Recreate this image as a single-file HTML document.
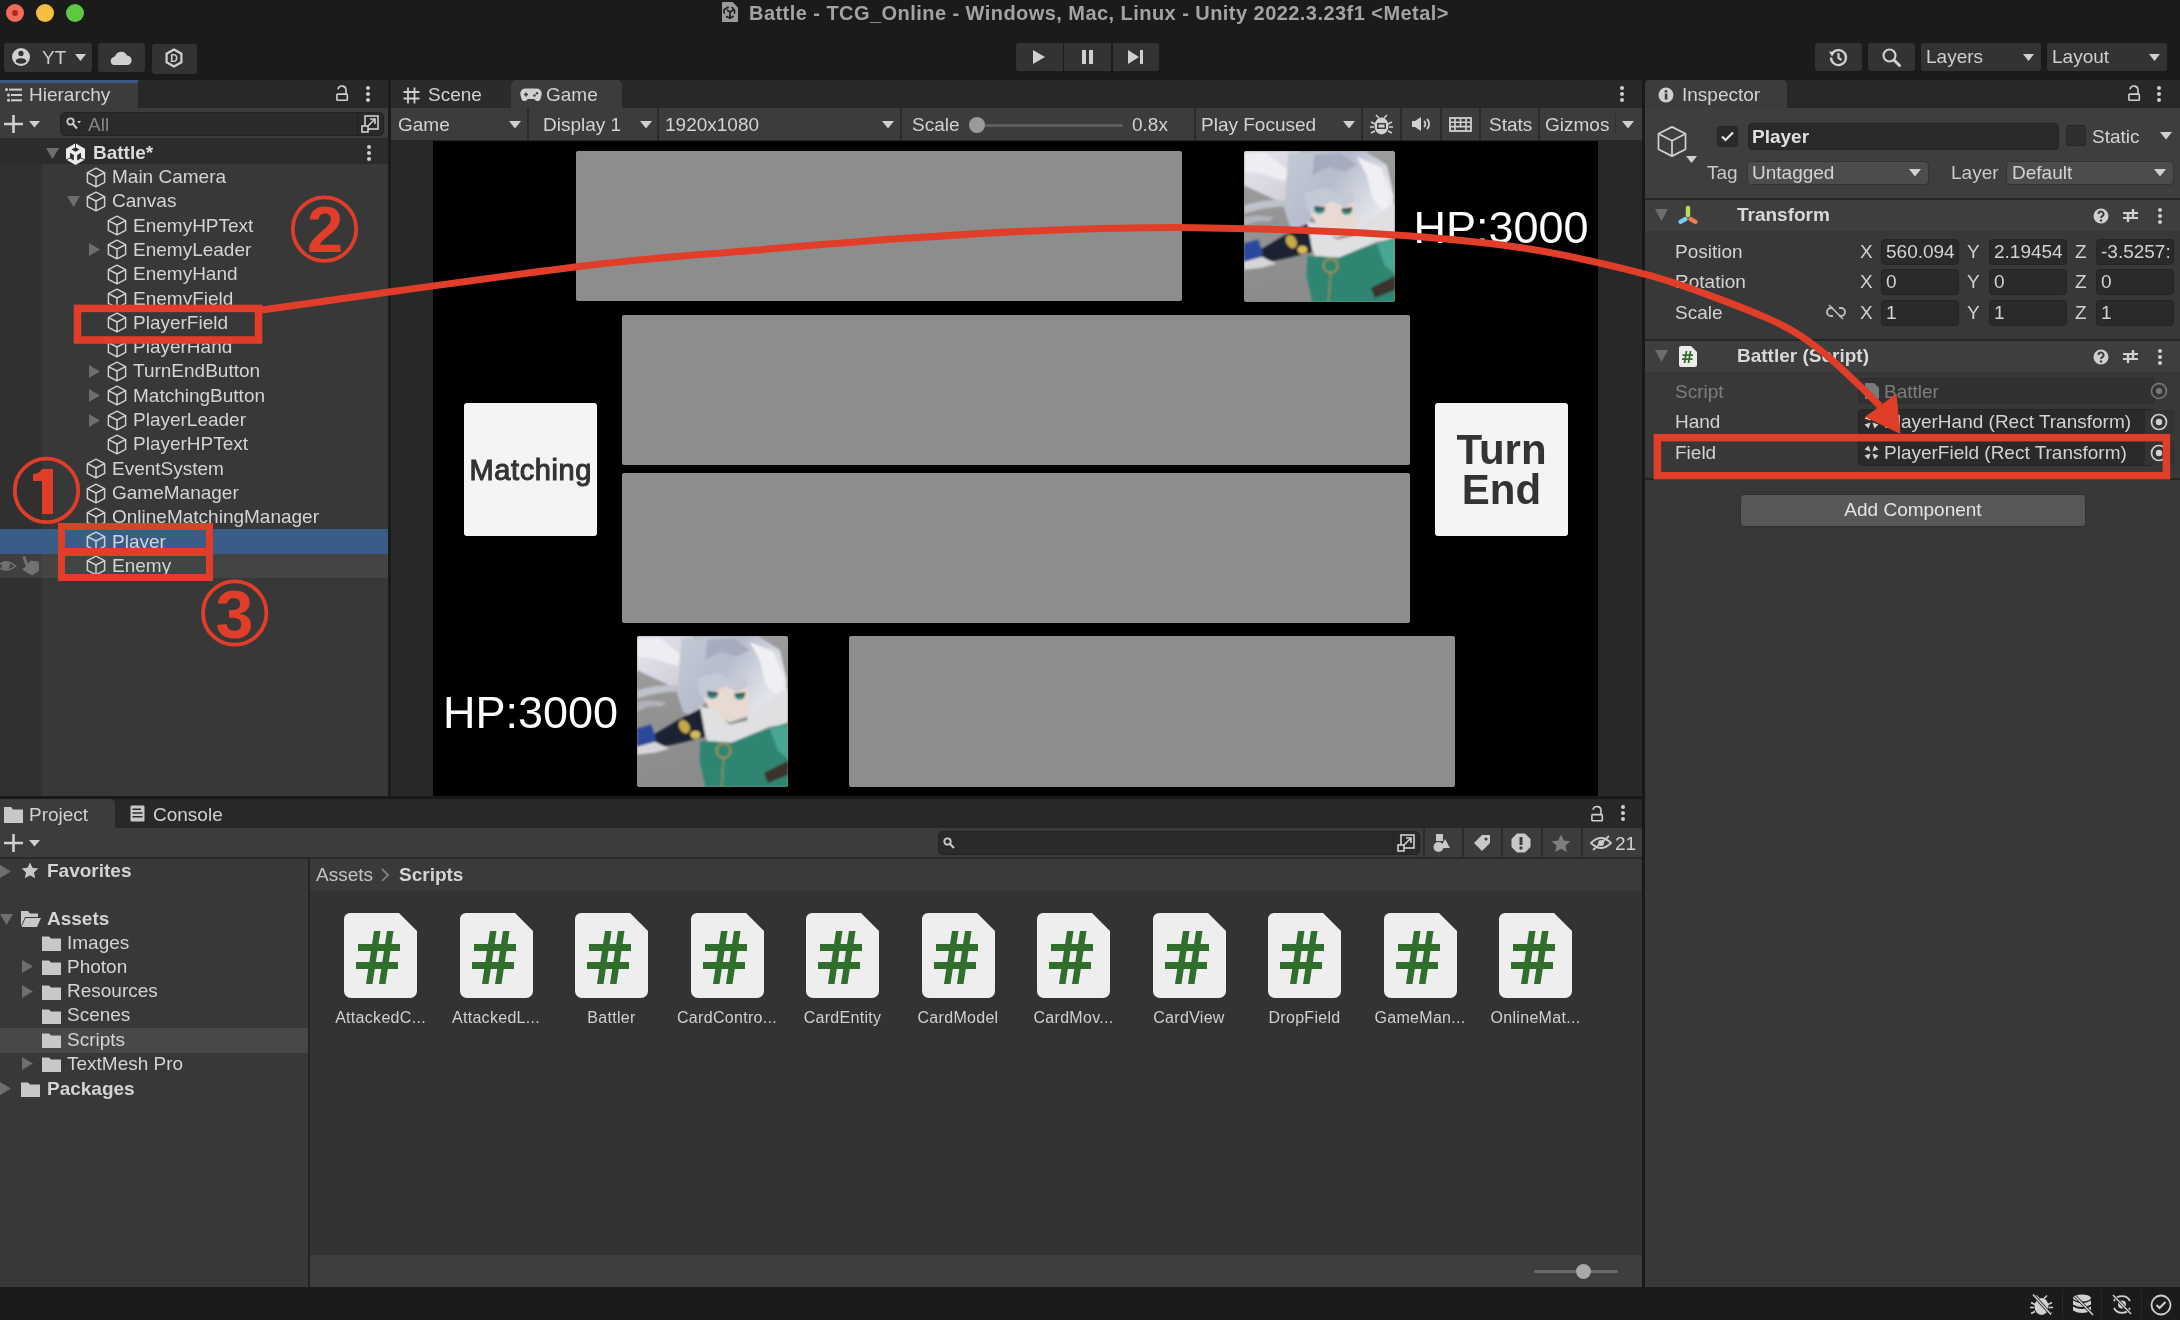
<!DOCTYPE html>
<html><head><meta charset="utf-8">
<style>
*{margin:0;padding:0;box-sizing:border-box}
html,body{width:2180px;height:1320px;overflow:hidden;}
body{will-change:transform;background:#1b1b1b;font-family:"Liberation Sans",sans-serif;color:#d2d2d2}
.a{position:absolute}
.t{position:absolute;white-space:nowrap;font-size:19px;line-height:20px}
.b{font-weight:bold}
</style></head><body>
<svg width="0" height="0" style="position:absolute"><defs>
<symbol id="cube" viewBox="0 0 20 21"><path d="M10 1.2L18.6 5.6V15.4L10 19.8L1.4 15.4V5.6Z M1.4 5.6L10 10L18.6 5.6 M10 10V19.8" fill="none" stroke="#d0d0d0" stroke-width="1.5" stroke-linejoin="round"/></symbol>
<symbol id="unity" viewBox="0 0 20 22"><path d="M9.5 0.3L19 5.8V16.6L9.5 22L0 16.6V5.8Z" fill="#ebebeb"/><g fill="#2c2c2c"><path d="M9.5 4.2L13.4 6.5L9.5 8.8L5.6 6.5Z"/><path d="M4 9.7L7.8 11.9V17.4L4 15.2Z"/><path d="M15 9.7L11.2 11.9V17.4L15 15.2Z"/></g><path d="M9.5 0V4.5M4.2 15L0 16.8M14.8 15L19 16.8" stroke="#2c2c2c" stroke-width="0.9"/></symbol>
<symbol id="girl" viewBox="0 0 150 150">
<defs><linearGradient id="gbg" x1="0" y1="0" x2="0.2" y2="1"><stop offset="0" stop-color="#a2a2a4"/><stop offset="0.5" stop-color="#939393"/><stop offset="1" stop-color="#8b8b8b"/></linearGradient>
<linearGradient id="ghair" x1="0" y1="0" x2="1" y2="0.6"><stop offset="0" stop-color="#c6cad6"/><stop offset="0.45" stop-color="#b6bccc"/><stop offset="0.8" stop-color="#dcdee6"/><stop offset="1" stop-color="#eeeef2"/></linearGradient>
<linearGradient id="gband" x1="0" y1="0" x2="1" y2="1"><stop offset="0" stop-color="#e8e6ee"/><stop offset="1" stop-color="#c8c8d4"/></linearGradient>
<filter id="gblur" x="-5%" y="-5%" width="110%" height="110%"><feGaussianBlur stdDeviation="0.8"/></filter>
<clipPath id="gclip"><rect width="150" height="150" rx="2"/></clipPath></defs>
<g clip-path="url(#gclip)">
<rect width="150" height="150" fill="url(#gbg)"/>
<g filter="url(#gblur)">
<path d="M0,0 L56,0 L64,28 L62,48 L48,62 L34,50 L0,34Z" fill="url(#gband)"/>
<path d="M0,4 L22,2 L46,20 L40,30 L16,22 L0,20Z" fill="#efedf3"/>
<path d="M0,54 Q22,47 44,49 L46,55 Q22,55 0,62Z" fill="#bfc2cb"/>
<path d="M0,66 Q10,62 30,66 L24,70 Q10,68 0,76Z" fill="#b0b3bb"/>
<path d="M44,2 L72,0 L120,0 L142,14 L149,45 L148,60 L132,76 L122,94 L108,98 L110,78 L104,62 L92,50 L78,52 L70,62 L58,80 L46,76 L40,58 L42,30Z" fill="url(#ghair)"/>
<path d="M70,4 L96,2 L112,14 L100,20 L84,16 L68,24Z" fill="#a4acbe"/>
<path d="M112,6 L136,16 L146,44 L140,60 L128,48 L122,24Z" fill="#f0f0f4"/>
<path d="M66,48 L108,44 L112,64 L110,80 L92,86 L74,76 L66,62Z" fill="#e8dad2"/>
<path d="M60,42 L80,36 L94,44 L108,40 L110,50 L100,56 L88,50 L80,54 L70,62 L62,58Z" fill="#c4c9d6"/>

<ellipse cx="75" cy="59" rx="5" ry="3.3" fill="#2a8a80"/><ellipse cx="102" cy="60" rx="5" ry="3.3" fill="#2a8a80"/>
<path d="M70,55 L81,56 L80,58 L70,58Z M97,57 L108,56 L107,59 L97,59Z" fill="#3c3c48"/>
<path d="M62,70 L74,72 L92,88 L110,84 L122,70 L132,62 L150,52 L150,88 L132,90 L118,96 L94,106 L70,104 L64,88Z" fill="#e0e0e3"/>
<path d="M63,104 L94,106 L118,96 L150,86 L150,150 L68,150 L62,124Z" fill="#2e8672"/>
<path d="M132,92 L150,88 L150,122 L140,114Z" fill="#4aa692"/>
<path d="M126,136 L150,124 L150,138 L130,146Z" fill="#3a332b"/>
<path d="M13,100 L40,84 L63,72 L68,100 L44,106 L16,112Z" fill="#1e2433"/>
<ellipse cx="47" cy="90" rx="5" ry="7" fill="#c8a84a" transform="rotate(-30 47 90)"/>
<ellipse cx="58" cy="98" rx="5" ry="4" fill="#d8bc5a"/>
<path d="M0,92 L14,88 L19,102 L12,112 L0,110Z" fill="#2c4a9c"/>
<path d="M0,110 L18,105 L32,112 L18,116 L0,118Z" fill="#d6d6da"/>
<circle cx="86" cy="114" r="7" fill="none" stroke="#b89040" stroke-width="1.4"/>
<path d="M86,121 L84,150" stroke="#b89040" stroke-width="1"/>
</g></g>
</symbol>
<symbol id="cs" viewBox="0 0 73 85"><path d="M6 0H55L73 18V78A7 7 0 0 1 66 85H7A7 7 0 0 1 0 78V6A6 6 0 0 1 6 0z" fill="#eeeeee"/><g fill="#2f6e2b"><path d="M30 18h6.5L28.5 71H22z"/><path d="M43 18h6.5L41.5 71H35z"/><rect x="14" y="31" width="42" height="7"/><rect x="12" y="49" width="42" height="7"/></g></symbol>
</defs></svg>

<!-- ===== TITLE BAR / TOOLBAR ===== -->
<div class="a" style="left:0;top:0;width:2180px;height:80px;background:#1b1b1b"></div>
<div class="a" style="left:6px;top:4px;width:18px;height:18px;border-radius:50%;background:#f26a5c"></div>
<div class="a" style="left:12px;top:10px;width:6px;height:6px;border-radius:50%;background:#b3281a"></div>
<div class="a" style="left:36px;top:4px;width:18px;height:18px;border-radius:50%;background:#f5bd42"></div>
<div class="a" style="left:66px;top:4px;width:18px;height:18px;border-radius:50%;background:#5ec843"></div>
<svg class="a" style="left:721px;top:1px" width="18" height="23" viewBox="0 0 18 23"><path d="M1 1h10.5l5.5 5.5V21H1z" fill="#9a9a9a"/><g fill="none" stroke="#1e1e1e" stroke-width="1.7" stroke-linejoin="round"><path d="M3.1 12.8V8.6L7.6 6M13.5 12.8V9.2L10.6 6M5.9 9L9 10.9L12.3 9M9 10.9V17.3M5 15.3L9 17.3L12.7 15.1"/></g></svg>
<div class="t b" style="left:749px;top:2px;font-size:20px;line-height:22px;color:#a3a3a3;letter-spacing:0.45px">Battle - TCG_Online - Windows, Mac, Linux - Unity 2022.3.23f1 &lt;Metal&gt;</div>
<!-- account -->
<div class="a" style="left:4px;top:43px;width:88px;height:29px;border-radius:3px;background:#333333"></div>
<svg class="a" style="left:11px;top:47px" width="20" height="20" viewBox="0 0 20 20"><circle cx="10" cy="10" r="9" fill="#d0d0d0"/><circle cx="10" cy="6.4" r="2.6" fill="#333333"/><ellipse cx="10" cy="14" rx="5.3" ry="2.8" fill="#333333"/></svg>
<div class="t" style="left:42px;top:48px;font-size:19px;color:#cfcfcf">YT</div>
<svg class="a" style="left:75px;top:54px" width="12" height="8" viewBox="0 0 12 8"><path d="M0 0h11L5.5 7z" fill="#d0d0d0"/></svg>
<div class="a" style="left:98px;top:43px;width:47px;height:29px;border-radius:3px;background:#333333"></div>
<svg class="a" style="left:110px;top:49px" width="23" height="16" viewBox="0 0 23 16"><path d="M3.5 16A4 4 0 0 1 2.8 8.6A4.4 4.4 0 0 1 5.2 7.2A6.4 6.4 0 0 1 17 6.4A4.9 4.9 0 0 1 18 16Z" fill="#d0d0d0"/></svg>
<div class="a" style="left:152px;top:44px;width:45px;height:30px;border-radius:3px;background:#333333"></div>
<svg class="a" style="left:164px;top:48px" width="20" height="20" viewBox="0 0 20 20"><path d="M10 1.5l7.4 4.25v8.5L10 18.5l-7.4-4.25v-8.5z" fill="none" stroke="#d0d0d0" stroke-width="2.2"/><text x="10" y="14.3" font-size="10.5" font-weight="bold" text-anchor="middle" fill="#d0d0d0" font-family="Liberation Sans">D</text></svg>
<!-- play -->
<div class="a" style="left:1016px;top:43px;width:47px;height:28px;border-radius:3px 0 0 3px;background:#333333"></div>
<div class="a" style="left:1064px;top:43px;width:47px;height:28px;background:#333333"></div>
<div class="a" style="left:1113px;top:43px;width:46px;height:28px;border-radius:0 3px 3px 0;background:#333333"></div>
<svg class="a" style="left:1031px;top:49px" width="16" height="16" viewBox="0 0 16 16"><path d="M2 1l12 7-12 7z" fill="#d0d0d0"/></svg>
<svg class="a" style="left:1080px;top:49px" width="16" height="16" viewBox="0 0 16 16"><rect x="2" y="1" width="4" height="14" fill="#d0d0d0"/><rect x="9" y="1" width="4" height="14" fill="#d0d0d0"/></svg>
<svg class="a" style="left:1127px;top:49px" width="18" height="16" viewBox="0 0 18 16"><path d="M1 1l11 7-11 7z" fill="#d0d0d0"/><rect x="13" y="1" width="3" height="14" fill="#d0d0d0"/></svg>
<!-- right -->
<div class="a" style="left:1815px;top:43px;width:47px;height:28px;border-radius:3px;background:#333333"></div>
<svg class="a" style="left:1828px;top:47px" width="21" height="21" viewBox="0 0 21 21"><path d="M4.2 6.5A7.5 7.5 0 1 1 3 10.5" fill="none" stroke="#d0d0d0" stroke-width="2.3"/><path d="M1 4.5l6 .5-3 4.5z" fill="#d0d0d0"/><path d="M10.5 6v5l3 2" fill="none" stroke="#d0d0d0" stroke-width="2.2"/></svg>
<div class="a" style="left:1868px;top:43px;width:47px;height:28px;border-radius:3px;background:#333333"></div>
<svg class="a" style="left:1881px;top:47px" width="21" height="21" viewBox="0 0 21 21"><circle cx="8.5" cy="8.5" r="6" fill="none" stroke="#d0d0d0" stroke-width="2.2"/><path d="M13 13l5.5 5.5" stroke="#d0d0d0" stroke-width="3" stroke-linecap="round"/></svg>
<div class="a" style="left:1921px;top:43px;width:120px;height:28px;border-radius:3px;background:#333333"></div>
<div class="t" style="left:1926px;top:47px;font-size:19px;color:#cfcfcf">Layers</div>
<svg class="a" style="left:2023px;top:54px" width="12" height="8" viewBox="0 0 12 8"><path d="M0 0h11L5.5 7z" fill="#d0d0d0"/></svg>
<div class="a" style="left:2047px;top:43px;width:120px;height:28px;border-radius:3px;background:#333333"></div>
<div class="t" style="left:2052px;top:47px;font-size:19px;color:#cfcfcf">Layout</div>
<svg class="a" style="left:2149px;top:54px" width="12" height="8" viewBox="0 0 12 8"><path d="M0 0h11L5.5 7z" fill="#d0d0d0"/></svg>


<!-- ===== HIERARCHY ===== -->
<div class="a" style="left:0;top:80px;width:388px;height:716px;background:#383838"></div>
<div class="a" style="left:0;top:80px;width:388px;height:28px;background:#282828"></div>
<div class="a" style="left:0;top:80px;width:138px;height:28px;background:#3c3c3c;border-top:3px solid #3a5a84"></div>
<svg class="a" style="left:5px;top:88px" width="17" height="14" viewBox="0 0 17 14"><g fill="#cfcfcf"><circle cx="1.5" cy="1.5" r="1.5"/><circle cx="3.5" cy="7" r="1.5"/><circle cx="3.5" cy="12.3" r="1.5"/><rect x="4" y="0.6" width="13" height="2"/><rect x="6" y="6" width="11" height="2"/><rect x="6" y="11.3" width="11" height="2"/></g></svg>
<div class="t" style="left:29px;top:85px;font-size:19px">Hierarchy</div>
<svg class="a" style="left:335px;top:85px" width="14" height="17" viewBox="0 0 14 17"><path d="M3.1 3.6A4.1 4.1 0 0 1 11 5.2V9" fill="none" stroke="#cfcfcf" stroke-width="1.6" stroke-linecap="round"/><rect x="1.9" y="9.1" width="10.4" height="6.1" rx="0.8" fill="none" stroke="#cfcfcf" stroke-width="1.6"/></svg>
<svg class="a" style="left:365px;top:86px" width="6" height="16" viewBox="0 0 6 16"><g fill="#cfcfcf"><circle cx="3" cy="2" r="2"/><circle cx="3" cy="8" r="2"/><circle cx="3" cy="14" r="2"/></g></svg>
<div class="a" style="left:0;top:108px;width:388px;height:31px;background:#3c3c3c"></div>
<div class="a" style="left:0;top:138px;width:388px;height:2px;background:#2a2a2a"></div>
<svg class="a" style="left:4px;top:115px" width="19" height="18" viewBox="0 0 19 18"><path d="M9.5 0v18M0 9h19" stroke="#d0d0d0" stroke-width="2.6"/></svg>
<svg class="a" style="left:29px;top:121px" width="11" height="7" viewBox="0 0 11 7"><path d="M0 0h11L5.5 6.5z" fill="#d0d0d0"/></svg>
<div class="a" style="left:60px;top:112px;width:324px;height:24px;border-radius:5px;background:#2a2a2a;border:1px solid #232323"></div>
<div class="a" style="left:357px;top:113px;width:1px;height:22px;background:#222"></div>
<svg class="a" style="left:66px;top:117px" width="15" height="13" viewBox="0 0 15 13"><circle cx="4.5" cy="4.5" r="3.2" fill="none" stroke="#cfcfcf" stroke-width="1.8"/><path d="M7 7l4 4.5" stroke="#cfcfcf" stroke-width="2"/><path d="M11 4h4l-2 2.5z" fill="#cfcfcf"/></svg>
<div class="t" style="left:88px;top:115px;font-size:19px;color:#858585">All</div>
<svg class="a" style="left:361px;top:115px" width="18" height="18" viewBox="0 0 18 18"><rect x="4" y="1" width="13" height="13" fill="none" stroke="#cfcfcf" stroke-width="1.6"/><rect x="1" y="11" width="6" height="6" fill="#2a2a2a" stroke="#cfcfcf" stroke-width="1.6"/><path d="M7 11l7-7M9 4h5v5" fill="none" stroke="#cfcfcf" stroke-width="1.6"/></svg>
<div class="a" style="left:0;top:140px;width:42px;height:656px;background:#303030"></div>
<div class="a" style="left:0;top:140px;width:388px;height:24px;background:#2c2c2c"></div>
<div class="a" style="left:0;top:529px;width:388px;height:25px;background:#395d87"></div>
<div class="a" style="left:0;top:554px;width:42px;height:24px;background:#3f3f3f"></div>
<div class="a" style="left:42px;top:554px;width:346px;height:24px;background:#444444"></div>
<svg class="a" style="left:0;top:559px" width="17" height="15" viewBox="0 0 17 15"><path d="M-3 7Q6 -1 15.5 7Q6 15 -3 7z" fill="none" stroke="#727272" stroke-width="1.5"/><circle cx="5.7" cy="6.3" r="4.2" fill="#727272"/></svg>
<svg class="a" style="left:21px;top:556px" width="19" height="20" viewBox="0 0 19 20"><path d="M2.2 1.6L5.6 10.8L2 13.2L9 17.8L11.5 18.6L17.5 14.6L17.2 6.2L10 5.4L8.2 6.8L6.6 8.8L3.8 0.8Z" fill="#727272" stroke="#727272" stroke-width="1.2" stroke-linejoin="round"/></svg>
<svg class="a" style="left:46px;top:147.7px" width="13" height="11" viewBox="0 0 13 11"><path d="M0 0h13L6.5 11z" fill="#6e6e6e"/></svg>
<svg class="a" style="left:66px;top:142.7px" width="20" height="22" viewBox="0 0 20 22"><use href="#unity"/></svg>
<div class="t b" style="left:93px;top:142.7px;font-size:19px;color:#dcdcdc">Battle*</div>
<svg class="a" style="left:366px;top:144.7px" width="6" height="16" viewBox="0 0 6 16"><g fill="#cfcfcf"><circle cx="3" cy="2" r="2"/><circle cx="3" cy="8" r="2"/><circle cx="3" cy="14" r="2"/></g></svg>
<svg class="a" style="left:86px;top:166.5px" width="20" height="21" viewBox="0 0 20 21"><use href="#cube"/></svg>
<div class="t" style="left:112px;top:167.0px;font-size:19px;color:#d4d4d4">Main Camera</div>
<svg class="a" style="left:67px;top:196.3px" width="13" height="11" viewBox="0 0 13 11"><path d="M0 0h13L6.5 11z" fill="#6e6e6e"/></svg>
<svg class="a" style="left:86px;top:190.8px" width="20" height="21" viewBox="0 0 20 21"><use href="#cube"/></svg>
<div class="t" style="left:112px;top:191.3px;font-size:19px;color:#d4d4d4">Canvas</div>
<svg class="a" style="left:107px;top:215.1px" width="20" height="21" viewBox="0 0 20 21"><use href="#cube"/></svg>
<div class="t" style="left:133px;top:215.6px;font-size:19px;color:#d4d4d4">EnemyHPText</div>
<svg class="a" style="left:89px;top:243.4px" width="11" height="13" viewBox="0 0 11 13"><path d="M0 0v13L11 6.5z" fill="#6e6e6e"/></svg>
<svg class="a" style="left:107px;top:239.4px" width="20" height="21" viewBox="0 0 20 21"><use href="#cube"/></svg>
<div class="t" style="left:133px;top:239.9px;font-size:19px;color:#d4d4d4">EnemyLeader</div>
<svg class="a" style="left:107px;top:263.7px" width="20" height="21" viewBox="0 0 20 21"><use href="#cube"/></svg>
<div class="t" style="left:133px;top:264.2px;font-size:19px;color:#d4d4d4">EnemyHand</div>
<svg class="a" style="left:107px;top:288.0px" width="20" height="21" viewBox="0 0 20 21"><use href="#cube"/></svg>
<div class="t" style="left:133px;top:288.5px;font-size:19px;color:#d4d4d4">EnemyField</div>
<svg class="a" style="left:107px;top:312.3px" width="20" height="21" viewBox="0 0 20 21"><use href="#cube"/></svg>
<div class="t" style="left:133px;top:312.8px;font-size:19px;color:#d4d4d4">PlayerField</div>
<svg class="a" style="left:107px;top:336.6px" width="20" height="21" viewBox="0 0 20 21"><use href="#cube"/></svg>
<div class="t" style="left:133px;top:337.1px;font-size:19px;color:#d4d4d4">PlayerHand</div>
<svg class="a" style="left:89px;top:364.9px" width="11" height="13" viewBox="0 0 11 13"><path d="M0 0v13L11 6.5z" fill="#6e6e6e"/></svg>
<svg class="a" style="left:107px;top:360.9px" width="20" height="21" viewBox="0 0 20 21"><use href="#cube"/></svg>
<div class="t" style="left:133px;top:361.4px;font-size:19px;color:#d4d4d4">TurnEndButton</div>
<svg class="a" style="left:89px;top:389.2px" width="11" height="13" viewBox="0 0 11 13"><path d="M0 0v13L11 6.5z" fill="#6e6e6e"/></svg>
<svg class="a" style="left:107px;top:385.2px" width="20" height="21" viewBox="0 0 20 21"><use href="#cube"/></svg>
<div class="t" style="left:133px;top:385.8px;font-size:19px;color:#d4d4d4">MatchingButton</div>
<svg class="a" style="left:89px;top:413.6px" width="11" height="13" viewBox="0 0 11 13"><path d="M0 0v13L11 6.5z" fill="#6e6e6e"/></svg>
<svg class="a" style="left:107px;top:409.6px" width="20" height="21" viewBox="0 0 20 21"><use href="#cube"/></svg>
<div class="t" style="left:133px;top:410.1px;font-size:19px;color:#d4d4d4">PlayerLeader</div>
<svg class="a" style="left:107px;top:433.9px" width="20" height="21" viewBox="0 0 20 21"><use href="#cube"/></svg>
<div class="t" style="left:133px;top:434.4px;font-size:19px;color:#d4d4d4">PlayerHPText</div>
<svg class="a" style="left:86px;top:458.2px" width="20" height="21" viewBox="0 0 20 21"><use href="#cube"/></svg>
<div class="t" style="left:112px;top:458.7px;font-size:19px;color:#d4d4d4">EventSystem</div>
<svg class="a" style="left:86px;top:482.5px" width="20" height="21" viewBox="0 0 20 21"><use href="#cube"/></svg>
<div class="t" style="left:112px;top:483.0px;font-size:19px;color:#d4d4d4">GameManager</div>
<svg class="a" style="left:86px;top:506.8px" width="20" height="21" viewBox="0 0 20 21"><use href="#cube"/></svg>
<div class="t" style="left:112px;top:507.3px;font-size:19px;color:#d4d4d4">OnlineMatchingManager</div>
<svg class="a" style="left:86px;top:531.1px" width="20" height="21" viewBox="0 0 20 21"><use href="#cube"/></svg>
<div class="t" style="left:112px;top:531.6px;font-size:19px;color:#d4d4d4">Player</div>
<svg class="a" style="left:86px;top:555.4px" width="20" height="21" viewBox="0 0 20 21"><use href="#cube"/></svg>
<div class="t" style="left:112px;top:555.9px;font-size:19px;color:#d4d4d4">Enemy</div>

<!-- ===== GAME ===== -->
<div class="a" style="left:391px;top:80px;width:1251px;height:28px;background:#282828"></div>
<div class="a" style="left:391px;top:80px;width:120px;height:28px;background:#2b2b2b;border-radius:5px 5px 0 0"></div>
<div class="a" style="left:511px;top:80px;width:111px;height:28px;background:#3c3c3c;border-radius:5px 5px 0 0"></div>
<svg class="a" style="left:403px;top:87px" width="17" height="17" viewBox="0 0 17 17"><path d="M5 0.5V16.5M11.5 0.5V16.5M0.5 5H16.5M0.5 11.5H16.5" stroke="#cfcfcf" stroke-width="1.8"/></svg>
<div class="t" style="left:428px;top:85px;font-size:19px">Scene</div>
<svg class="a" style="left:520px;top:88px" width="22" height="14" viewBox="0 0 22 14"><path d="M5 0.5h12a5 5 0 0 1 4.5 6.5l-1 4a3 3 0 0 1-5 1.2L14 11H8l-1.5 1.2a3 3 0 0 1-5-1.2l-1-4A5 5 0 0 1 5 .5z" fill="#cfcfcf"/><path d="M4 6.5h4M6 4.5v4" stroke="#3c3c3c" stroke-width="1.5"/><circle cx="14.5" cy="7.5" r="1.2" fill="#3c3c3c"/><circle cx="17" cy="5.2" r="1.2" fill="#3c3c3c"/></svg>
<div class="t" style="left:546px;top:85px;font-size:19px">Game</div>
<svg class="a" style="left:1619px;top:86px" width="6" height="16" viewBox="0 0 6 16"><g fill="#cfcfcf"><circle cx="3" cy="2" r="2"/><circle cx="3" cy="8" r="2"/><circle cx="3" cy="14" r="2"/></g></svg>
<div class="a" style="left:391px;top:108px;width:1251px;height:32px;background:#3c3c3c"></div>
<div class="a" style="left:527px;top:108px;width:2px;height:32px;background:#2b2b2b"></div>
<div class="a" style="left:657px;top:108px;width:2px;height:32px;background:#2b2b2b"></div>
<div class="a" style="left:900px;top:108px;width:2px;height:32px;background:#2b2b2b"></div>
<div class="a" style="left:1194px;top:108px;width:2px;height:32px;background:#2b2b2b"></div>
<div class="a" style="left:1361px;top:108px;width:2px;height:32px;background:#2b2b2b"></div>
<div class="a" style="left:1400px;top:108px;width:2px;height:32px;background:#2b2b2b"></div>
<div class="a" style="left:1440px;top:108px;width:2px;height:32px;background:#2b2b2b"></div>
<div class="a" style="left:1479px;top:108px;width:2px;height:32px;background:#2b2b2b"></div>
<div class="a" style="left:1538px;top:108px;width:2px;height:32px;background:#2b2b2b"></div>
<div class="a" style="left:1615px;top:114px;width:1px;height:20px;background:#2f2f2f"></div>
<div class="t" style="left:398px;top:115px;font-size:19px">Game</div>
<svg class="a" style="left:509px;top:121px" width="12" height="8" viewBox="0 0 12 8"><path d="M0 0h12L6 7.5z" fill="#d0d0d0"/></svg>
<div class="t" style="left:543px;top:115px;font-size:19px">Display 1</div>
<svg class="a" style="left:640px;top:121px" width="12" height="8" viewBox="0 0 12 8"><path d="M0 0h12L6 7.5z" fill="#d0d0d0"/></svg>
<div class="t" style="left:665px;top:115px;font-size:19px">1920x1080</div>
<svg class="a" style="left:882px;top:121px" width="12" height="8" viewBox="0 0 12 8"><path d="M0 0h12L6 7.5z" fill="#d0d0d0"/></svg>
<div class="t" style="left:912px;top:115px;font-size:19px">Scale</div>
<div class="a" style="left:977px;top:124px;width:146px;height:3px;background:#5e5e5e;border-radius:2px"></div>
<div class="a" style="left:969px;top:117px;width:16px;height:16px;background:#9a9a9a;border-radius:50%"></div>
<div class="t" style="left:1132px;top:115px;font-size:19px">0.8x</div>
<div class="t" style="left:1201px;top:115px;font-size:19px">Play Focused</div>
<svg class="a" style="left:1343px;top:121px" width="12" height="8" viewBox="0 0 12 8"><path d="M0 0h12L6 7.5z" fill="#d0d0d0"/></svg>
<svg class="a" style="left:1370px;top:113px" width="23" height="22" viewBox="0 0 23 22"><path d="M6 2l3 3M17 2l-3 3" stroke="#d0d0d0" stroke-width="1.6"/><ellipse cx="11.5" cy="13" rx="7" ry="8.5" fill="#d0d0d0"/><path d="M1 9l4 2M22 9l-4 2M0 14h4M23 14h-4M1 20l4-2M22 20l-4-2" stroke="#d0d0d0" stroke-width="1.6"/><rect x="7" y="10" width="9" height="6" fill="#3c3c3c"/><rect x="8.5" y="11.5" width="6" height="3" fill="#d0d0d0"/></svg>
<svg class="a" style="left:1411px;top:117px" width="21" height="14" viewBox="0 0 21 14"><path d="M1 4h3l6-4v14l-6-4H1z" fill="#d0d0d0"/><path d="M13 4a4 4 0 0 1 0 6M16 2a7 7 0 0 1 0 10" fill="none" stroke="#d0d0d0" stroke-width="1.8"/></svg>
<svg class="a" style="left:1449px;top:117px" width="23" height="15" viewBox="0 0 23 15"><rect x="1" y="1" width="21" height="13" fill="none" stroke="#d0d0d0" stroke-width="1.8"/><path d="M1 5.3h21M1 9.6h21M6 1v13M11.5 1v8.6M17 1v13" stroke="#d0d0d0" stroke-width="1.6"/></svg>
<div class="t" style="left:1489px;top:115px;font-size:19px">Stats</div>
<div class="t" style="left:1545px;top:115px;font-size:19px">Gizmos</div>
<svg class="a" style="left:1622px;top:121px" width="12" height="8" viewBox="0 0 12 8"><path d="M0 0h12L6 7.5z" fill="#d0d0d0"/></svg>
<div class="a" style="left:391px;top:140px;width:1251px;height:656px;background:#282828"></div>
<div class="a" style="left:433px;top:141px;width:1165px;height:655px;background:#000"></div>
<div class="a" style="left:576px;top:151px;width:606px;height:150px;background:#8d8d8d;border-radius:2px"></div>
<div class="a" style="left:622px;top:315px;width:788px;height:150px;background:#8d8d8d;border-radius:2px"></div>
<div class="a" style="left:622px;top:473px;width:788px;height:150px;background:#8d8d8d;border-radius:2px"></div>
<div class="a" style="left:849px;top:636px;width:606px;height:151px;background:#8d8d8d;border-radius:2px"></div>
<svg class="a" style="left:1244px;top:151px" width="151" height="151" viewBox="0 0 150 150"><use href="#girl"/></svg>
<svg class="a" style="left:637px;top:636px" width="151" height="151" viewBox="0 0 150 150"><use href="#girl"/></svg>
<div class="t" style="left:1413.5px;top:202.5px;font-size:45px;line-height:50px;color:#fff">HP:3000</div>
<div class="t" style="left:443px;top:688px;font-size:45px;line-height:50px;color:#fff">HP:3000</div>
<div class="a" style="left:464px;top:403px;width:133px;height:133px;background:#f4f4f4;border-radius:3px"></div>
<div class="t" style="left:469.5px;top:453.5px;font-size:29px;line-height:32px;color:#333333;-webkit-text-stroke:1.1px #333333;letter-spacing:0.6px">Matching</div>
<div class="a" style="left:1435px;top:403px;width:133px;height:133px;background:#f4f4f4;border-radius:3px"></div>
<div class="t b" style="left:1435px;top:430px;width:133px;text-align:center;font-size:42px;line-height:39.5px;color:#333333;white-space:normal">Turn<br>End</div>

<!-- ===== INSPECTOR ===== -->
<!--INSP-->
<div class="a" style="left:1642px;top:80px;width:3px;height:1207px;background:#191919"></div>
<div class="a" style="left:1645px;top:80px;width:535px;height:1207px;background:#383838"></div>
<div class="a" style="left:1645px;top:80px;width:535px;height:28px;background:#282828"></div>
<div class="a" style="left:1645px;top:80px;width:142px;height:28px;background:#3c3c3c;border-radius:5px 5px 0 0"></div>
<svg class="a" style="left:1658px;top:87px" width="16" height="16" viewBox="0 0 16 16"><circle cx="8" cy="8" r="7.5" fill="#cfcfcf"/><rect x="6.8" y="6.5" width="2.6" height="6" fill="#3c3c3c"/><circle cx="8" cy="4.3" r="1.4" fill="#3c3c3c"/></svg>
<div class="t" style="left:1682px;top:85px;font-size:19px">Inspector</div>
<svg class="a" style="left:2127px;top:85px" width="14" height="17" viewBox="0 0 14 17"><path d="M3.1 3.6A4.1 4.1 0 0 1 11 5.2V9" fill="none" stroke="#cfcfcf" stroke-width="1.6" stroke-linecap="round"/><rect x="1.9" y="9.1" width="10.4" height="6.1" rx="0.8" fill="none" stroke="#cfcfcf" stroke-width="1.6"/></svg>
<svg class="a" style="left:2156px;top:86px" width="6" height="16" viewBox="0 0 6 16"><g fill="#cfcfcf"><circle cx="3" cy="2" r="2"/><circle cx="3" cy="8" r="2"/><circle cx="3" cy="14" r="2"/></g></svg>
<div class="a" style="left:1645px;top:108px;width:535px;height:91px;background:#3e3e3e"></div>
<div class="a" style="left:1645px;top:198px;width:535px;height:2px;background:#252525"></div>
<svg class="a" style="left:1656px;top:125px" width="32" height="33" viewBox="0 0 20 21"><path d="M10 1.2L18.6 5.6V15.4L10 19.8L1.4 15.4V5.6Z M1.4 5.6L10 10L18.6 5.6 M10 10V19.8" fill="none" stroke="#d0d0d0" stroke-width="1.1" stroke-linejoin="round"/></svg>
<svg class="a" style="left:1686px;top:156px" width="11" height="7" viewBox="0 0 11 7"><path d="M0 0h11L5.5 7z" fill="#d0d0d0"/></svg>
<div class="a" style="left:1717px;top:126px;width:21px;height:21px;background:#2a2a2a;border-radius:3px;border:1px solid #262626"></div>
<svg class="a" style="left:1719px;top:128px" width="17" height="17" viewBox="0 0 17 17"><path d="M3 8.5l3.5 3.5L14 4.5" fill="none" stroke="#e8e8e8" stroke-width="2.2"/></svg>
<div class="a" style="left:1748px;top:123px;width:311px;height:27px;background:#2a2a2a;border-radius:4px;border:1px solid #242424"></div>
<div class="t b" style="left:1752px;top:127px;font-size:19px;color:#e0e0e0">Player</div>
<div class="a" style="left:2066px;top:125px;width:20px;height:21px;background:#2f2f2f;border-radius:3px;border:1px solid #262626"></div>
<div class="t" style="left:2092px;top:127px;font-size:19px">Static</div>
<svg class="a" style="left:2160px;top:132px" width="12" height="8" viewBox="0 0 12 8"><path d="M0 0h12L6 7.5z" fill="#d0d0d0"/></svg>
<div class="t" style="left:1707px;top:163px;font-size:19px;color:#c8c8c8">Tag</div>
<div class="a" style="left:1747px;top:161px;width:182px;height:24px;background:#4c4c4c;border-radius:4px;border:1px solid #333"></div>
<div class="t" style="left:1752px;top:163px;font-size:19px">Untagged</div>
<svg class="a" style="left:1909px;top:169px" width="12" height="8" viewBox="0 0 12 8"><path d="M0 0h12L6 7.5z" fill="#d0d0d0"/></svg>
<div class="t" style="left:1951px;top:163px;font-size:19px;color:#c8c8c8">Layer</div>
<div class="a" style="left:2006px;top:161px;width:168px;height:24px;background:#4c4c4c;border-radius:4px;border:1px solid #333"></div>
<div class="t" style="left:2012px;top:163px;font-size:19px">Default</div>
<svg class="a" style="left:2154px;top:169px" width="12" height="8" viewBox="0 0 12 8"><path d="M0 0h12L6 7.5z" fill="#d0d0d0"/></svg>
<div class="a" style="left:1645px;top:231px;width:535px;height:108px;background:#383838"></div>
<div class="a" style="left:1645px;top:200px;width:535px;height:31px;background:#3e3e3e"></div>
<svg class="a" style="left:1655px;top:209px" width="13" height="12" viewBox="0 0 13 12"><path d="M0 0h13L6.5 12z" fill="#6e6e6e"/></svg>
<svg class="a" style="left:1677px;top:205px" width="22" height="20" viewBox="0 0 22 20"><path d="M11 3v7" stroke="#b4e05c" stroke-width="4.4" stroke-linecap="round"/><path d="M8.5 14L3.5 16.8" stroke="#7cc8f2" stroke-width="4.4" stroke-linecap="round"/><path d="M13.5 14L18.5 16.8" stroke="#ee7c52" stroke-width="4.4" stroke-linecap="round"/></svg>
<div class="t b" style="left:1737px;top:205px;font-size:19px;color:#d8d8d8">Transform</div>
<svg class="a" style="left:2093px;top:208px" width="16" height="16" viewBox="0 0 16 16"><circle cx="8" cy="8" r="7.5" fill="#d0d0d0"/><path d="M5.5 6a2.5 2.5 0 1 1 3.5 2.3c-.8.4-1 .8-1 1.7" fill="none" stroke="#3e3e3e" stroke-width="2"/><circle cx="8" cy="12.5" r="1.2" fill="#3e3e3e"/></svg>
<svg class="a" style="left:2122px;top:207px" width="17" height="17" viewBox="0 0 17 17"><path d="M1 6h15M1 11h15" stroke="#d0d0d0" stroke-width="1.8"/><path d="M11 2v8M6 7v8" stroke="#d0d0d0" stroke-width="2.4"/></svg>
<svg class="a" style="left:2157px;top:208px" width="6" height="16" viewBox="0 0 6 16"><g fill="#cfcfcf"><circle cx="3" cy="2" r="2"/><circle cx="3" cy="8" r="2"/><circle cx="3" cy="14" r="2"/></g></svg>
<div class="t" style="left:1675px;top:241.5px;font-size:19px">Position</div>
<div class="t" style="left:1860px;top:241.5px;font-size:19px">X</div>
<div class="a" style="left:1881px;top:238.5px;width:78px;height:26px;background:#2a2a2a;border-radius:4px;border:1px solid #242424;overflow:hidden"><div class="t" style="left:4px;top:2px;font-size:19px">560.094</div></div>
<div class="t" style="left:1967px;top:241.5px;font-size:19px">Y</div>
<div class="a" style="left:1989px;top:238.5px;width:78px;height:26px;background:#2a2a2a;border-radius:4px;border:1px solid #242424;overflow:hidden"><div class="t" style="left:4px;top:2px;font-size:19px">2.19454</div></div>
<div class="t" style="left:2075px;top:241.5px;font-size:19px">Z</div>
<div class="a" style="left:2096px;top:238.5px;width:78px;height:26px;background:#2a2a2a;border-radius:4px;border:1px solid #242424;overflow:hidden"><div class="t" style="left:4px;top:2px;font-size:19px">-3.5257:</div></div>
<div class="t" style="left:1675px;top:272px;font-size:19px">Rotation</div>
<div class="t" style="left:1860px;top:272px;font-size:19px">X</div>
<div class="a" style="left:1881px;top:269px;width:78px;height:26px;background:#2a2a2a;border-radius:4px;border:1px solid #242424;overflow:hidden"><div class="t" style="left:4px;top:2px;font-size:19px">0</div></div>
<div class="t" style="left:1967px;top:272px;font-size:19px">Y</div>
<div class="a" style="left:1989px;top:269px;width:78px;height:26px;background:#2a2a2a;border-radius:4px;border:1px solid #242424;overflow:hidden"><div class="t" style="left:4px;top:2px;font-size:19px">0</div></div>
<div class="t" style="left:2075px;top:272px;font-size:19px">Z</div>
<div class="a" style="left:2096px;top:269px;width:78px;height:26px;background:#2a2a2a;border-radius:4px;border:1px solid #242424;overflow:hidden"><div class="t" style="left:4px;top:2px;font-size:19px">0</div></div>
<div class="t" style="left:1675px;top:302.5px;font-size:19px">Scale</div>
<div class="t" style="left:1860px;top:302.5px;font-size:19px">X</div>
<div class="a" style="left:1881px;top:299.5px;width:78px;height:26px;background:#2a2a2a;border-radius:4px;border:1px solid #242424;overflow:hidden"><div class="t" style="left:4px;top:2px;font-size:19px">1</div></div>
<div class="t" style="left:1967px;top:302.5px;font-size:19px">Y</div>
<div class="a" style="left:1989px;top:299.5px;width:78px;height:26px;background:#2a2a2a;border-radius:4px;border:1px solid #242424;overflow:hidden"><div class="t" style="left:4px;top:2px;font-size:19px">1</div></div>
<div class="t" style="left:2075px;top:302.5px;font-size:19px">Z</div>
<div class="a" style="left:2096px;top:299.5px;width:78px;height:26px;background:#2a2a2a;border-radius:4px;border:1px solid #242424;overflow:hidden"><div class="t" style="left:4px;top:2px;font-size:19px">1</div></div>
<svg class="a" style="left:1826px;top:304px" width="20" height="16" viewBox="0 0 20 16"><path d="M7 4H5a4 4 0 0 0 0 8h2M13 4h2a4 4 0 0 1 0 8h-2" fill="none" stroke="#c0c0c0" stroke-width="1.8"/><path d="M3 1l14 14" stroke="#c0c0c0" stroke-width="1.6"/></svg>
<div class="a" style="left:1645px;top:339px;width:535px;height:2px;background:#252525"></div>
<div class="a" style="left:1645px;top:341px;width:535px;height:31px;background:#3e3e3e"></div>
<svg class="a" style="left:1655px;top:350px" width="13" height="12" viewBox="0 0 13 12"><path d="M0 0h13L6.5 12z" fill="#6e6e6e"/></svg>
<svg class="a" style="left:1679px;top:346px" width="18" height="21" viewBox="0 0 18 21"><path d="M2 0h10l6 6v13a2 2 0 0 1-2 2H2a2 2 0 0 1-2-2V2a2 2 0 0 1 2-2z" fill="#ececec"/><g fill="#2f6e2b"><path d="M6.6 5h1.8L6.4 17H4.6z"/><path d="M10.6 5h1.8L10.4 17H8.6z"/><rect x="3.5" y="8.2" width="10.5" height="1.8"/><rect x="3" y="12.2" width="10.5" height="1.8"/></g></svg>
<div class="t b" style="left:1737px;top:346px;font-size:19px;color:#d8d8d8">Battler (Script)</div>
<svg class="a" style="left:2093px;top:349px" width="16" height="16" viewBox="0 0 16 16"><circle cx="8" cy="8" r="7.5" fill="#d0d0d0"/><path d="M5.5 6a2.5 2.5 0 1 1 3.5 2.3c-.8.4-1 .8-1 1.7" fill="none" stroke="#3e3e3e" stroke-width="2"/><circle cx="8" cy="12.5" r="1.2" fill="#3e3e3e"/></svg>
<svg class="a" style="left:2122px;top:348px" width="17" height="17" viewBox="0 0 17 17"><path d="M1 6h15M1 11h15" stroke="#d0d0d0" stroke-width="1.8"/><path d="M11 2v8M6 7v8" stroke="#d0d0d0" stroke-width="2.4"/></svg>
<svg class="a" style="left:2157px;top:349px" width="6" height="16" viewBox="0 0 6 16"><g fill="#cfcfcf"><circle cx="3" cy="2" r="2"/><circle cx="3" cy="8" r="2"/><circle cx="3" cy="14" r="2"/></g></svg>
<div class="a" style="left:1645px;top:372px;width:535px;height:106px;background:#383838"></div>
<div class="t" style="left:1675px;top:382px;font-size:19px;color:#7e7e7e">Script</div>
<div class="a" style="left:1858px;top:378px;width:297px;height:26px;background:#313131;border-radius:4px;border:1px solid #2c2c2c"></div>
<svg class="a" style="left:1865px;top:383px" width="14" height="16" viewBox="0 0 14 16"><path d="M0 0h9l5 5v11H0z" fill="#7a7a7a"/></svg>
<div class="t" style="left:1884px;top:382px;font-size:19px;color:#7e7e7e">Battler</div>
<svg class="a" style="left:2150px;top:382px" width="18" height="18" viewBox="0 0 18 18"><circle cx="9" cy="9" r="7.5" fill="none" stroke="#7a7a7a" stroke-width="1.6"/><circle cx="9" cy="9" r="3" fill="#7a7a7a"/></svg>
<div class="t" style="left:1675px;top:412px;font-size:19px">Hand</div>
<div class="a" style="left:1858px;top:409px;width:297px;height:26px;background:#2a2a2a;border-radius:4px;border:1px solid #242424"></div>
<div class="a" style="left:2145px;top:410px;width:30px;height:24px;background:#333;border-radius:0 4px 4px 0"></div>
<svg class="a" style="left:1864px;top:414px" width="15" height="15" viewBox="0 0 15 15"><path d="M0.5 4.5L4.5 0.5L6.6 6.6Z M10.5 0.5L14.5 4.5L8.4 6.6Z M0.5 10.5L4.5 14.5L6.6 8.4Z M14.5 10.5L10.5 14.5L8.4 8.4Z" fill="#d0d0d0"/></svg>
<div class="t" style="left:1884px;top:412px;font-size:19px">PlayerHand (Rect Transform)</div>
<svg class="a" style="left:2150px;top:413px" width="18" height="18" viewBox="0 0 18 18"><circle cx="9" cy="9" r="7.5" fill="none" stroke="#d0d0d0" stroke-width="1.7"/><circle cx="9" cy="9" r="3.2" fill="#d0d0d0"/></svg>
<div class="t" style="left:1675px;top:443px;font-size:19px">Field</div>
<div class="a" style="left:1858px;top:440px;width:297px;height:26px;background:#2a2a2a;border-radius:4px;border:1px solid #242424"></div>
<div class="a" style="left:2145px;top:441px;width:30px;height:24px;background:#333;border-radius:0 4px 4px 0"></div>
<svg class="a" style="left:1864px;top:445px" width="15" height="15" viewBox="0 0 15 15"><path d="M0.5 4.5L4.5 0.5L6.6 6.6Z M10.5 0.5L14.5 4.5L8.4 6.6Z M0.5 10.5L4.5 14.5L6.6 8.4Z M14.5 10.5L10.5 14.5L8.4 8.4Z" fill="#d0d0d0"/></svg>
<div class="t" style="left:1884px;top:443px;font-size:19px">PlayerField (Rect Transform)</div>
<svg class="a" style="left:2150px;top:444px" width="18" height="18" viewBox="0 0 18 18"><circle cx="9" cy="9" r="7.5" fill="none" stroke="#d0d0d0" stroke-width="1.7"/><circle cx="9" cy="9" r="3.2" fill="#d0d0d0"/></svg>
<div class="a" style="left:1645px;top:478px;width:535px;height:2px;background:#252525"></div>
<div class="a" style="left:1740px;top:494px;width:346px;height:33px;background:#585858;border-radius:4px;border:1px solid #303030"></div>
<div class="t" style="left:1740px;top:500px;width:346px;text-align:center;font-size:19px;color:#e4e4e4">Add Component</div>
<!--/INSP-->

<!-- ===== PROJECT ===== -->
<!--PROJ-->
<div class="a" style="left:0;top:796px;width:1642px;height:3px;background:#191919"></div>
<div class="a" style="left:0;top:799px;width:1642px;height:488px;background:#383838"></div>
<div class="a" style="left:0;top:799px;width:1642px;height:29px;background:#282828"></div>
<div class="a" style="left:0;top:799px;width:115px;height:29px;background:#3c3c3c;border-radius:0 5px 0 0"></div>
<svg class="a" style="left:4px;top:807px" width="19" height="16" viewBox="0 0 19 16"><path d="M0 0h7l2 2.5h10V16H0z" fill="#c8c8c8"/></svg>
<div class="t" style="left:29px;top:805px;font-size:19px">Project</div>
<svg class="a" style="left:130px;top:805px" width="15" height="17" viewBox="0 0 15 17"><rect x="0.5" y="0.5" width="14" height="16" rx="1.2" fill="#c8c8c8"/><path d="M2.5 4.3h8.5M2.5 8h10M2.5 11.7h10" stroke="#2a2a2a" stroke-width="1.5"/></svg>
<div class="t" style="left:153px;top:805px;font-size:19px">Console</div>
<svg class="a" style="left:1590px;top:805px" width="14" height="17" viewBox="0 0 14 16"><path d="M3.1 3.6A4.1 4.1 0 0 1 11 5.2V9" fill="none" stroke="#cfcfcf" stroke-width="1.6" stroke-linecap="round"/><rect x="1.9" y="9.1" width="10.4" height="6.1" rx="0.8" fill="none" stroke="#cfcfcf" stroke-width="1.6"/></svg>
<svg class="a" style="left:1620px;top:805px" width="6" height="16" viewBox="0 0 6 16"><g fill="#cfcfcf"><circle cx="3" cy="2" r="2"/><circle cx="3" cy="8" r="2"/><circle cx="3" cy="14" r="2"/></g></svg>
<div class="a" style="left:0;top:828px;width:1642px;height:30px;background:#3c3c3c"></div>
<div class="a" style="left:0;top:857px;width:1642px;height:2px;background:#2a2a2a"></div>
<svg class="a" style="left:4px;top:834px" width="19" height="18" viewBox="0 0 19 18"><path d="M9.5 0v18M0 9h19" stroke="#d0d0d0" stroke-width="2.6"/></svg>
<svg class="a" style="left:29px;top:840px" width="11" height="7" viewBox="0 0 11 7"><path d="M0 0h11L5.5 6.5z" fill="#d0d0d0"/></svg>
<div class="a" style="left:938px;top:831px;width:482px;height:24px;border-radius:5px;background:#2a2a2a;border:1px solid #232323"></div>
<div class="a" style="left:1393px;top:832px;width:1px;height:22px;background:#222"></div>
<svg class="a" style="left:943px;top:837px" width="12" height="12" viewBox="0 0 12 12"><circle cx="4.5" cy="4.5" r="3.2" fill="none" stroke="#cfcfcf" stroke-width="1.8"/><path d="M7 7l4 4" stroke="#cfcfcf" stroke-width="2"/></svg>
<svg class="a" style="left:1397px;top:834px" width="18" height="18" viewBox="0 0 18 18"><rect x="4" y="1" width="13" height="13" fill="none" stroke="#cfcfcf" stroke-width="1.6"/><rect x="1" y="11" width="6" height="6" fill="#2a2a2a" stroke="#cfcfcf" stroke-width="1.6"/><path d="M7 11l7-7M9 4h5v5" fill="none" stroke="#cfcfcf" stroke-width="1.6"/></svg>
<div class="a" style="left:1423px;top:828px;width:2px;height:30px;background:#2b2b2b"></div>
<div class="a" style="left:1462px;top:828px;width:2px;height:30px;background:#2b2b2b"></div>
<div class="a" style="left:1501px;top:828px;width:2px;height:30px;background:#2b2b2b"></div>
<div class="a" style="left:1541px;top:828px;width:2px;height:30px;background:#2b2b2b"></div>
<div class="a" style="left:1581px;top:828px;width:2px;height:30px;background:#2b2b2b"></div>
<svg class="a" style="left:1432px;top:833px" width="20" height="20" viewBox="0 0 20 20"><rect x="4" y="1" width="7" height="7" fill="#c8c8c8"/><circle cx="6.5" cy="14" r="5" fill="#c8c8c8"/><path d="M13 6l5 9h-10z" fill="#c8c8c8"/></svg>
<svg class="a" style="left:1473px;top:834px" width="18" height="18" viewBox="0 0 18 18"><path d="M9 1h8v8l-8 8-8-8z" fill="#c8c8c8"/><circle cx="13" cy="5" r="1.6" fill="#3c3c3c"/></svg>
<svg class="a" style="left:1511px;top:833px" width="20" height="20" viewBox="0 0 20 20"><path d="M6 0.5h8L19.5 6v8L14 19.5H6L0.5 14V6z" fill="#c8c8c8"/><rect x="8.5" y="4" width="3" height="8" fill="#3c3c3c"/><circle cx="10" cy="15" r="1.7" fill="#3c3c3c"/></svg>
<svg class="a" style="left:1551px;top:834px" width="20" height="19" viewBox="0 0 20 19"><path d="M10 0.5l2.8 6 6.5.7-4.9 4.4 1.4 6.5L10 14.8l-5.8 3.3 1.4-6.5L.7 7.2l6.5-.7z" fill="#7e7e7e"/></svg>
<svg class="a" style="left:1590px;top:835px" width="22" height="16" viewBox="0 0 22 16"><path d="M1 8Q11-2 21 8Q11 18 1 8z" fill="none" stroke="#c8c8c8" stroke-width="1.8"/><circle cx="11" cy="8" r="3" fill="#c8c8c8"/><path d="M3 15L19 1" stroke="#c8c8c8" stroke-width="1.8"/></svg>
<div class="t" style="left:1615px;top:834px;font-size:19px">21</div>
<div class="a" style="left:308px;top:859px;width:2px;height:428px;background:#232323"></div>
<div class="a" style="left:0;top:1028px;width:308px;height:25px;background:#484848"></div>
<svg class="a" style="left:0px;top:864.5px" width="11" height="13" viewBox="0 0 11 13"><path d="M0 0v13L11 6.5z" fill="#6e6e6e"/></svg>
<svg class="a" style="left:21px;top:862px" width="18" height="17" viewBox="0 0 20 19"><path d="M10 0.5l2.8 6 6.5.7-4.9 4.4 1.4 6.5L10 14.8l-5.8 3.3 1.4-6.5L.7 7.2l6.5-.7z" fill="#c8c8c8"/></svg>
<div class="t b" style="left:47px;top:861.0px;font-size:19px;color:#d4d4d4">Favorites</div>
<svg class="a" style="left:0px;top:913.5px" width="13" height="11" viewBox="0 0 13 11"><path d="M0 0h13L6.5 11z" fill="#6e6e6e"/></svg>
<svg class="a" style="left:21px;top:910.5px" width="20" height="16" viewBox="0 0 20 16"><path d="M0 0h7l2 2.5h8V6H4L0 15z" fill="#c8c8c8"/><path d="M4.5 7H20L16 16H0.5z" fill="#c8c8c8"/></svg>
<div class="t b" style="left:47px;top:908.5px;font-size:19px;color:#d4d4d4">Assets</div>
<svg class="a" style="left:42px;top:935.0px" width="19" height="16" viewBox="0 0 19 16"><path d="M0 1.5h7l2 2h10V16H0z" fill="#c8c8c8"/></svg>
<div class="t" style="left:67px;top:932.5px;font-size:19px;color:#d4d4d4">Images</div>
<svg class="a" style="left:22px;top:960.1px" width="11" height="13" viewBox="0 0 11 13"><path d="M0 0v13L11 6.5z" fill="#6e6e6e"/></svg>
<svg class="a" style="left:42px;top:959.1px" width="19" height="16" viewBox="0 0 19 16"><path d="M0 1.5h7l2 2h10V16H0z" fill="#c8c8c8"/></svg>
<div class="t" style="left:67px;top:956.6px;font-size:19px;color:#d4d4d4">Photon</div>
<svg class="a" style="left:22px;top:984.5px" width="11" height="13" viewBox="0 0 11 13"><path d="M0 0v13L11 6.5z" fill="#6e6e6e"/></svg>
<svg class="a" style="left:42px;top:983.5px" width="19" height="16" viewBox="0 0 19 16"><path d="M0 1.5h7l2 2h10V16H0z" fill="#c8c8c8"/></svg>
<div class="t" style="left:67px;top:981.0px;font-size:19px;color:#d4d4d4">Resources</div>
<svg class="a" style="left:42px;top:1007.8px" width="19" height="16" viewBox="0 0 19 16"><path d="M0 1.5h7l2 2h10V16H0z" fill="#c8c8c8"/></svg>
<div class="t" style="left:67px;top:1005.3px;font-size:19px;color:#d4d4d4">Scenes</div>
<svg class="a" style="left:42px;top:1032.1px" width="19" height="16" viewBox="0 0 19 16"><path d="M0 1.5h7l2 2h10V16H0z" fill="#c8c8c8"/></svg>
<div class="t" style="left:67px;top:1029.6px;font-size:19px;color:#d4d4d4">Scripts</div>
<svg class="a" style="left:22px;top:1057.4px" width="11" height="13" viewBox="0 0 11 13"><path d="M0 0v13L11 6.5z" fill="#6e6e6e"/></svg>
<svg class="a" style="left:42px;top:1056.4px" width="19" height="16" viewBox="0 0 19 16"><path d="M0 1.5h7l2 2h10V16H0z" fill="#c8c8c8"/></svg>
<div class="t" style="left:67px;top:1053.9px;font-size:19px;color:#d4d4d4">TextMesh Pro</div>
<svg class="a" style="left:0px;top:1082.0px" width="11" height="13" viewBox="0 0 11 13"><path d="M0 0v13L11 6.5z" fill="#6e6e6e"/></svg>
<svg class="a" style="left:21px;top:1081.0px" width="19" height="16" viewBox="0 0 19 16"><path d="M0 1.5h7l2 2h10V16H0z" fill="#c8c8c8"/></svg>
<div class="t b" style="left:47px;top:1078.5px;font-size:19px;color:#d4d4d4">Packages</div>
<div class="a" style="left:310px;top:859px;width:1332px;height:32px;background:#3a3a3a"></div>
<div class="a" style="left:310px;top:891px;width:1332px;height:364px;background:#333333"></div>
<div class="t" style="left:316px;top:865px;font-size:19px;color:#c4c4c4">Assets</div>
<svg class="a" style="left:381px;top:868px" width="8" height="14" viewBox="0 0 8 14"><path d="M1 1l6 6-6 6" fill="none" stroke="#8a8a8a" stroke-width="1.6"/></svg>
<div class="t b" style="left:399px;top:865px;font-size:19px;color:#d4d4d4">Scripts</div>
<svg class="a" style="left:344.0px;top:913px" width="73" height="85" viewBox="0 0 73 85"><use href="#cs"/></svg>
<div class="t" style="left:314.0px;top:1007.5px;width:133px;text-align:center;font-size:16px;letter-spacing:0.3px;color:#d0d0d0">AttackedC...</div>
<svg class="a" style="left:459.5px;top:913px" width="73" height="85" viewBox="0 0 73 85"><use href="#cs"/></svg>
<div class="t" style="left:429.5px;top:1007.5px;width:133px;text-align:center;font-size:16px;letter-spacing:0.3px;color:#d0d0d0">AttackedL...</div>
<svg class="a" style="left:575.0px;top:913px" width="73" height="85" viewBox="0 0 73 85"><use href="#cs"/></svg>
<div class="t" style="left:545.0px;top:1007.5px;width:133px;text-align:center;font-size:16px;letter-spacing:0.3px;color:#d0d0d0">Battler</div>
<svg class="a" style="left:690.5px;top:913px" width="73" height="85" viewBox="0 0 73 85"><use href="#cs"/></svg>
<div class="t" style="left:660.5px;top:1007.5px;width:133px;text-align:center;font-size:16px;letter-spacing:0.3px;color:#d0d0d0">CardContro...</div>
<svg class="a" style="left:806.0px;top:913px" width="73" height="85" viewBox="0 0 73 85"><use href="#cs"/></svg>
<div class="t" style="left:776.0px;top:1007.5px;width:133px;text-align:center;font-size:16px;letter-spacing:0.3px;color:#d0d0d0">CardEntity</div>
<svg class="a" style="left:921.5px;top:913px" width="73" height="85" viewBox="0 0 73 85"><use href="#cs"/></svg>
<div class="t" style="left:891.5px;top:1007.5px;width:133px;text-align:center;font-size:16px;letter-spacing:0.3px;color:#d0d0d0">CardModel</div>
<svg class="a" style="left:1037.0px;top:913px" width="73" height="85" viewBox="0 0 73 85"><use href="#cs"/></svg>
<div class="t" style="left:1007.0px;top:1007.5px;width:133px;text-align:center;font-size:16px;letter-spacing:0.3px;color:#d0d0d0">CardMov...</div>
<svg class="a" style="left:1152.5px;top:913px" width="73" height="85" viewBox="0 0 73 85"><use href="#cs"/></svg>
<div class="t" style="left:1122.5px;top:1007.5px;width:133px;text-align:center;font-size:16px;letter-spacing:0.3px;color:#d0d0d0">CardView</div>
<svg class="a" style="left:1268.0px;top:913px" width="73" height="85" viewBox="0 0 73 85"><use href="#cs"/></svg>
<div class="t" style="left:1238.0px;top:1007.5px;width:133px;text-align:center;font-size:16px;letter-spacing:0.3px;color:#d0d0d0">DropField</div>
<svg class="a" style="left:1383.5px;top:913px" width="73" height="85" viewBox="0 0 73 85"><use href="#cs"/></svg>
<div class="t" style="left:1353.5px;top:1007.5px;width:133px;text-align:center;font-size:16px;letter-spacing:0.3px;color:#d0d0d0">GameMan...</div>
<svg class="a" style="left:1499.0px;top:913px" width="73" height="85" viewBox="0 0 73 85"><use href="#cs"/></svg>
<div class="t" style="left:1469.0px;top:1007.5px;width:133px;text-align:center;font-size:16px;letter-spacing:0.3px;color:#d0d0d0">OnlineMat...</div>
<div class="a" style="left:310px;top:1255px;width:1332px;height:32px;background:#3e3e3e"></div>
<div class="a" style="left:1534px;top:1270px;width:84px;height:3px;background:#6a6a6a;border-radius:2px"></div>
<div class="a" style="left:1576px;top:1264px;width:15px;height:15px;background:#a8a8a8;border-radius:50%"></div>
<!--/PROJ-->
<!--STAT-->
<div class="a" style="left:0;top:1287px;width:2180px;height:33px;background:#1b1b1b"></div>
<svg class="a" style="left:2030px;top:1293px" width="23" height="23" viewBox="0 0 23 22"><path d="M6 2l3 3M17 2l-3 3" stroke="#d0d0d0" stroke-width="1.6"/><ellipse cx="11.5" cy="13" rx="7" ry="8.5" fill="#d0d0d0"/><path d="M1 9l4 2M22 9l-4 2M0 14h4M23 14h-4M1 20l4-2M22 20l-4-2" stroke="#d0d0d0" stroke-width="1.6"/><path d="M3 1l18 20" stroke="#1b1b1b" stroke-width="3"/><path d="M3 1l18 20" stroke="#d0d0d0" stroke-width="1.5"/></svg>
<div class="a" style="left:2062px;top:1290px;width:1px;height:28px;background:#2a2a2a"></div>
<svg class="a" style="left:2072px;top:1294px" width="22" height="22" viewBox="0 0 22 22"><ellipse cx="10" cy="4" rx="9" ry="3.5" fill="#d0d0d0"/><path d="M1 6.5q9 5 18 0v4q-9 5-18 0zM1 12.5q9 5 18 0v4q-9 5-18 0z" fill="#d0d0d0"/><path d="M3 2l18 19" stroke="#1b1b1b" stroke-width="3"/><path d="M3 2l18 19" stroke="#d0d0d0" stroke-width="1.5"/></svg>
<div class="a" style="left:2101px;top:1290px;width:1px;height:28px;background:#2a2a2a"></div>
<svg class="a" style="left:2110px;top:1293px" width="24" height="23" viewBox="0 0 24 23"><path d="M4 8a9 9 0 0 1 16 0M20 15a9 9 0 0 1-16 0" fill="none" stroke="#d0d0d0" stroke-width="1.8"/><circle cx="12" cy="11.5" r="4" fill="#d0d0d0"/><path d="M3 2l18 19" stroke="#1b1b1b" stroke-width="3"/><path d="M3 2l18 19" stroke="#d0d0d0" stroke-width="1.5"/></svg>
<div class="a" style="left:2141px;top:1290px;width:1px;height:28px;background:#2a2a2a"></div>
<svg class="a" style="left:2150px;top:1294px" width="22" height="22" viewBox="0 0 22 22"><circle cx="11" cy="11" r="9.5" fill="none" stroke="#d0d0d0" stroke-width="1.8"/><path d="M6.5 11l3 3 6-6" fill="none" stroke="#d0d0d0" stroke-width="2"/></svg>
<!--/STAT-->

<!-- ===== ANNOTATIONS ===== -->
<!--ANNO-->
<svg class="a" style="left:0;top:0" width="2180" height="1320" viewBox="0 0 2180 1320">
<g fill="none" stroke="#e03e28">
<rect x="77.5" y="308.4" width="181" height="31.6" stroke-width="7.5"/>
<rect x="61.5" y="526.5" width="148" height="26" stroke-width="7"/>
<rect x="61.5" y="551.5" width="148" height="26" stroke-width="7"/>
<rect x="1657.4" y="437.7" width="509" height="38" stroke-width="7.5"/>
<circle cx="324.5" cy="229.1" r="31.7" stroke-width="3.8"/>
<circle cx="46.5" cy="490.4" r="31.7" stroke-width="3.8"/>
<circle cx="234.7" cy="613" r="31.7" stroke-width="3.8"/>
<path d="M262,310 C285.0,306.8 343.7,298.2 400,290.5 C456.3,282.8 541.8,270.6 600,264 C658.2,257.4 699.3,254.9 749,250.7 C798.7,246.5 848.3,242.2 898,238.8 C947.7,235.4 997.3,232.2 1047,230.4 C1096.7,228.6 1139.2,227.0 1196,227.7 C1252.8,228.4 1332.8,231.0 1387.6,234.4 C1442.4,237.8 1482.9,241.8 1525,248.2 C1567.1,254.6 1610.2,265.3 1640,272.8 C1669.8,280.3 1682.3,285.6 1704,293.4 C1725.7,301.2 1754.1,312.4 1770,319.4 C1785.9,326.3 1789.7,328.8 1799.5,335.1 C1809.3,341.4 1819.2,349.0 1829,357.3 C1838.8,365.6 1850.1,376.7 1858.6,384.8 C1867.1,392.9 1876.4,402.5 1880,406" stroke-width="7" stroke-linecap="butt"/>
</g>
<path d="M1865,417 L1896.5,393.5 L1900.5,434Z" fill="#e03e28"/>
<g fill="#e03e28" font-family="Liberation Sans" font-weight="bold" text-anchor="middle">
<text x="325" y="252" font-size="65">2</text>
<text x="234.5" y="637.5" font-size="68">3</text>
</g>
<path d="M42 469h11v45h-11v-33h-9v-7q6 0 9-5z" fill="#e03e28"/>
</svg>
<!--/ANNO-->
</body></html>
